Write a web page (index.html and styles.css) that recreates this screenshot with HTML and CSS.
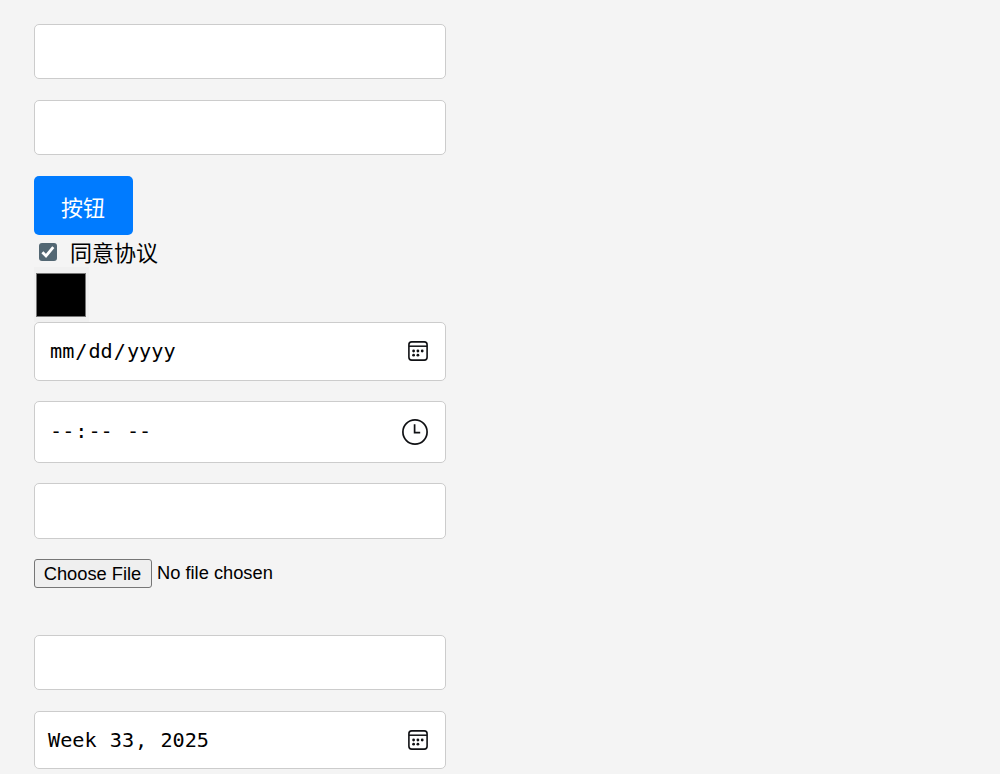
FILE: index.html
```
<!DOCTYPE html>
<html lang="zh">
<head>
    <meta charset="UTF-8">
    <meta name="viewport" content="width=device-width, initial-scale=1.0">
    <title>表单</title>
    <link rel="stylesheet" href="styles.css">
</head>
<body>

<form class="form">
    <input type="text" class="field">
    <input type="password" class="field">

    <button type="button" class="btn">按钮</button>

    <label class="agree">
        <span class="check">
            <svg width="18" height="18" viewBox="0 0 18 18">
                <path d="M3.4 9.2 L7 13 L14.3 4.2" fill="none" stroke="#fff" stroke-width="2.8"/>
            </svg>
        </span>
        <span>同意协议</span>
    </label>

    <div class="color"><div class="swatch"></div></div>

    <div class="field picker date">
        <div class="value"><span>mm</span>/<span>dd</span>/<span>yyyy</span></div>
        <svg class="calendar" width="20" height="20" viewBox="0 0 20 20">
            <rect x="0.9" y="0.9" width="18.2" height="18.2" rx="2.8" fill="none" stroke="#101114" stroke-width="1.6"/>
            <path d="M1 5.2H19" stroke="#101114" stroke-width="1.5"/>
            <g fill="#101114">
                <circle cx="5.6" cy="10" r="1.4"/>
                <circle cx="9.9" cy="10" r="1.4"/>
                <circle cx="14.2" cy="10" r="1.4"/>
                <circle cx="5.6" cy="14.2" r="1.4"/>
                <circle cx="9.9" cy="14.2" r="1.4"/>
            </g>
        </svg>
    </div>

    <div class="field picker time">
        <div class="value"><span>--</span>:<span>--</span> <span>--</span></div>
        <svg class="clock" width="26" height="26" viewBox="0 0 26 26">
            <circle cx="13" cy="13" r="12.1" fill="none" stroke="#101114" stroke-width="1.7"/>
            <path d="M12.6 5.2V13.6H18.2" fill="none" stroke="#101114" stroke-width="1.7"/>
        </svg>
    </div>

    <input type="text" class="field number">

    <div class="file">
        <button type="button" class="choose">Choose File</button>
        <span class="file-name">No file chosen</span>
    </div>

    <input type="text" class="field">

    <div class="field picker week">
        <div class="value">Week <span>33</span>, <span>2025</span></div>
        <svg class="calendar" width="20" height="20" viewBox="0 0 20 20">
            <rect x="0.9" y="0.9" width="18.2" height="18.2" rx="2.8" fill="none" stroke="#101114" stroke-width="1.6"/>
            <path d="M1 5.2H19" stroke="#101114" stroke-width="1.5"/>
            <g fill="#101114">
                <circle cx="5.6" cy="10" r="1.4"/>
                <circle cx="9.9" cy="10" r="1.4"/>
                <circle cx="14.2" cy="10" r="1.4"/>
                <circle cx="5.6" cy="14.2" r="1.4"/>
                <circle cx="9.9" cy="14.2" r="1.4"/>
            </g>
        </svg>
    </div>
</form>

</body>
</html>
```

FILE: styles.css
```
* {
    box-sizing: border-box;
}

body {
    margin: 0;
    padding: 24px 34px 0;
    background-color: #f4f4f4;
    color: #000;
    font-family: "Noto Sans CJK SC", sans-serif;
    font-size: 22px;
}

.form {
    display: flex;
    flex-direction: column;
    align-items: flex-start;
}

.field {
    width: 412px;
    height: 55px;
    margin: 0 0 21px;
    padding: 0 14px;
    border: 1px solid #ccc;
    border-radius: 5px;
    background-color: #fff;
}

.btn {
    width: 99px;
    height: 59px;
    padding: 0 1px 0 0;
    border: none;
    border-radius: 5px;
    background-color: #007bff;
    color: #fff;
    font-family: inherit;
    font-size: 22px;
    cursor: pointer;
}

.agree {
    display: flex;
    align-items: center;
    gap: 13px;
    height: 32px;
    padding-left: 5px;
    line-height: 32px;
}

.check {
    width: 18px;
    height: 18px;
    margin-top: 2px;
    border-radius: 3px;
    background-color: #536773;
}

.check svg {
    display: block;
}

.color {
    width: 55px;
    height: 55px;
    padding: 6px 2px;
    background-color: #f0f0f0;
}

.swatch {
    width: 50px;
    height: 44px;
    border: 1px solid #777;
    background-color: #000;
}

.picker {
    display: flex;
    align-items: center;
    justify-content: space-between;
    padding: 0 17px 0 14px;
    font-family: "DejaVu Sans Mono", monospace;
    font-size: 20.2px;
}

.value {
    white-space: pre;
}

.value span {
    padding: 0 1px;
}

.date {
    height: 59px;
    margin-bottom: 20px;
    padding-bottom: 1px;
}

.time {
    height: 62px;
    margin-bottom: 20px;
}

.time .value {
    padding-bottom: 2px;
}

.number {
    height: 56px;
    margin-bottom: 20px;
}

.file {
    display: flex;
    align-items: center;
    gap: 5px;
    height: 29px;
    margin-bottom: 47px;
    font-family: "Liberation Sans", Arial, sans-serif;
    font-size: 18.3px;
}

.file-name {
    padding-bottom: 2px;
}

.choose {
    width: 118px;
    height: 29px;
    padding: 0 1px 0 0;
    border: 1px solid #767676;
    border-radius: 3px;
    background-color: #efefef;
    color: #000;
    font: inherit;
}

.week {
    height: 58px;
    margin-bottom: 0;
    padding-left: 13px;
}
```
